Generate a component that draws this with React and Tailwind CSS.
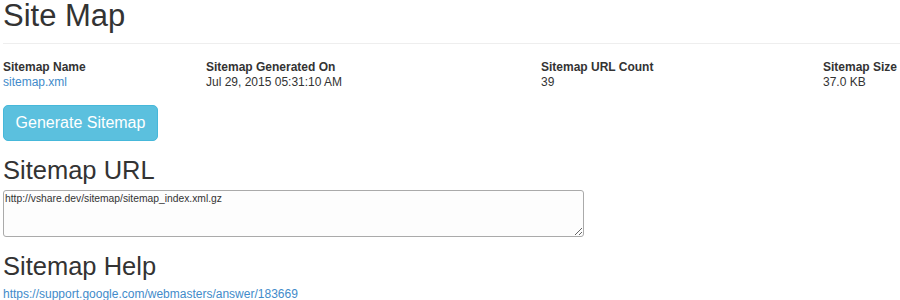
export default function App() {
  const cols = [
    { label: 'Sitemap Name', value: 'sitemap.xml', link: true },
    { label: 'Sitemap Generated On', value: 'Jul 29, 2015 05:31:10 AM' },
    { label: 'Sitemap URL Count', value: '39' },
    { label: 'Sitemap Size', value: '37.0 KB' },
  ]

  return (
    <div className="w-[900px] h-[300px] overflow-hidden bg-white pl-[3px] font-['Liberation_Sans',Arial,sans-serif] text-[#333]">
      <div className="h-[43px] pt-[1px]">
        <h1 className="text-[31px] leading-[30px] font-normal">Site Map</h1>
      </div>
      <div className="border-t border-[#eee] w-[960px]" />

      <div className="grid grid-cols-[203px_335px_282px_200px] pt-[16px] text-[12px] leading-[15px]">
        {cols.map((c) => (
          <div key={c.label}>
            <div className="font-bold">{c.label}</div>
            {c.link ? (
              <a href="#" className="text-[#428bca]">{c.value}</a>
            ) : (
              <div>{c.value}</div>
            )}
          </div>
        ))}
      </div>

      <button className="mt-[15px] flex h-[36px] w-[155px] items-center justify-center rounded-[5px] border border-[#46b8da] bg-[#5bc0de] text-[16px] text-white">
        Generate Sitemap
      </button>

      <h3 className="mt-[16px] text-[25.5px] leading-[26px] font-normal">Sitemap URL</h3>
      <textarea
        readOnly
        defaultValue="http://vshare.dev/sitemap/sitemap_index.xml.gz"
        className="mt-[7px] block h-[47px] w-[581px] rounded-[3px] border border-[#aaa] bg-[#fdfdfd] pl-[1px] pt-[2px] text-[10.3px] leading-[12px] text-[#333] font-['Liberation_Sans',Arial,sans-serif] outline-none"
      />

      <h3 className="mt-[16px] text-[25.5px] leading-[26px] font-normal">Sitemap Help</h3>
      <a href="#" className="mt-[8px] block text-[12px] leading-[15px] text-[#428bca]">
        https://support.google.com/webmasters/answer/183669
      </a>
    </div>
  )
}
